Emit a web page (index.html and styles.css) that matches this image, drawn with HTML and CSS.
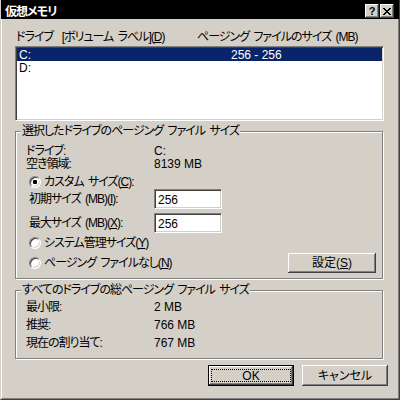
FILE: index.html
```html
<!DOCTYPE html>
<html lang="ja">
<head>
    <meta charset="UTF-8">
    <title>仮想メモリ</title>
    <link rel="stylesheet" href="styles.css">
</head>
<body>
    <div class="window">
        <div class="titlebar">
            <span class="title">仮想メモリ</span>
            <div class="caption-buttons">
                <span class="cap-btn help">?</span>
                <span class="cap-btn">
                    <svg width="8" height="7" viewBox="0 0 8 7" shape-rendering="crispEdges">
                        <path d="M0 0h2v1H0zM6 0h2v1H6zM1 1h2v1H1zM5 1h2v1H5zM2 2h4v1H2zM3 3h2v1H3zM2 4h4v1H2zM1 5h2v1H1zM5 5h2v1H5zM0 6h2v1H0zM6 6h2v1H6z" fill="#000"/>
                    </svg>
                </span>
            </div>
        </div>

        <div class="client">
            <div class="list-header">
                <span class="col-head">ドライブ&nbsp; [ボリューム ラベル](<u>D</u>)</span>
                <span>ページング ファイルのサイズ (MB)</span>
            </div>
            <div class="listbox">
                <div class="list-row selected"><span class="col-drive num">C:</span><span class="num">256 - 256</span></div>
                <div class="list-row"><span class="col-drive num">D:</span></div>
            </div>

            <!-- selected drive -->
            <div class="group group-drive">
                <span class="legend">選択したドライブのページング ファイル サイズ</span>
                <div class="info-list">
                    <div class="info"><span class="label">ドライブ:</span><span class="num">C:</span></div>
                    <div class="info"><span class="label">空き領域:</span><span class="num">8139 MB</span></div>
                </div>
                <div class="option first-option"><span class="radio on"></span><span>カスタム サイズ(<u>C</u>):</span></div>
                <div class="size-row"><span class="size-label">初期サイズ (MB)(<u>I</u>):</span><span class="edit num">256</span></div>
                <div class="size-row gap"><span class="size-label">最大サイズ (MB)(<u>X</u>):</span><span class="edit num">256</span></div>
                <div class="option sys-option"><span class="radio"></span><span>システム管理サイズ(<u>Y</u>)</span></div>
                <div class="last-row">
                    <div class="option"><span class="radio"></span><span>ページング ファイルなし(<u>N</u>)</span></div>
                    <button class="btn set-btn">設定(<u>S</u>)</button>
                </div>
            </div>

            <!-- all drives -->
            <div class="group group-total">
                <span class="legend">すべてのドライブの総ページング ファイル サイズ</span>
                <div class="total-list">
                    <div class="total"><span class="label">最小限:</span><span class="num">2 MB</span></div>
                    <div class="total"><span class="label">推奨:</span><span class="num">766 MB</span></div>
                    <div class="total"><span class="label">現在の割り当て:</span><span class="num">767 MB</span></div>
                </div>
            </div>

            <div class="dialog-buttons">
                <button class="btn default num">OK</button>
                <button class="btn">キャンセル</button>
            </div>
        </div>
    </div>
</body>
</html>
```

FILE: styles.css
```css
body {
    margin: 0;
    font-family: "Liberation Sans", "Noto Sans CJK JP", sans-serif;
    font-size: 12px;
    line-height: 12px;
    color: #000;
    letter-spacing: -1px;
    word-spacing: 2px;
    font-feature-settings: "palt";
}

u { text-decoration: underline; }

.num { letter-spacing: 0; word-spacing: 0; }

.window {
    width: 400px;
    height: 400px;
    box-sizing: border-box;
    background-color: #d4d0c8;
    border-left: 1px solid #d4d0c8;
    border-right: 1px solid #404040;
    border-bottom: 1px solid #404040;
    display: flex;
    flex-direction: column;
}

.titlebar {
    height: 19px;
    flex: none;
    background-color: #000;
    display: flex;
    justify-content: space-between;
    align-items: flex-start;
}

.title {
    color: #fff;
    font-weight: bold;
    padding: 6px 0 0 4px;
}

.caption-buttons {
    display: flex;
    gap: 1px;
    padding: 4px 5px 0 0;
}

.cap-btn {
    width: 14px;
    height: 14px;
    box-sizing: border-box;
    background-color: #d4d0c8;
    box-shadow: inset -1px -1px #404040, inset 1px 1px #fff, inset -2px -2px #808080;
    display: flex;
    align-items: center;
    justify-content: center;
}

.cap-btn.help {
    font-weight: bold;
    font-size: 11px;
    letter-spacing: 0;
    padding-bottom: 1px;
}

.client {
    flex: 1;
    border-left: 1px solid #fff;
    border-right: 1px solid #808080;
    border-bottom: 1px solid #808080;
    padding: 12px 14px 0 13px;
    display: flex;
    flex-direction: column;
}

.list-header {
    display: flex;
    height: 12px;
    padding-left: 1px;
}

.col-head { width: 181px; }

.listbox {
    margin-top: 3px;
    height: 75px;
    box-sizing: border-box;
    background-color: #fff;
    border: 1px solid;
    border-color: #808080 #fff #fff #808080;
    box-shadow: inset 1px 1px #404040, inset -1px -1px #d4d0c8;
    padding: 1px;
}

.list-row {
    display: flex;
    align-items: center;
    height: 13px;
    padding-left: 2px;
}

.list-row.selected {
    background-color: #0a246a;
    color: #fff;
}

.col-drive { width: 212px; }

.group {
    width: 368px;
    box-sizing: border-box;
    border: 1px solid #808080;
    box-shadow: inset 1px 1px #fff, 1px 1px #fff;
    display: flex;
    flex-direction: column;
}

.group-drive { margin-top: 10px; height: 148px; }
.group-total { margin-top: 11px; height: 69px; }

.legend {
    align-self: flex-start;
    margin: -7px 0 0 5px;
    padding: 0 1px;
    height: 13px;
    line-height: 13px;
    background-color: #d4d0c8;
}

.info-list { margin-top: 6px; }

.info {
    display: flex;
    align-items: center;
    height: 13px;
    padding-left: 10px;
}

.label { width: 128px; }

.option {
    display: flex;
    align-items: center;
    gap: 3px;
    height: 14px;
    padding-left: 13px;
}

.first-option { margin-top: 5px; }
.sys-option { margin-top: 3px; }

.radio {
    width: 12px;
    height: 12px;
    flex: none;
    box-sizing: border-box;
    border-radius: 50%;
    border: 1px solid;
    border-color: #808080 #fff #fff #808080;
    box-shadow: inset 1px 1px #404040, inset -1px -1px #d4d0c8;
    background-color: #fff;
    position: relative;
}

.radio.on::after {
    content: "";
    position: absolute;
    left: 3px;
    top: 3px;
    width: 4px;
    height: 4px;
    border-radius: 1px;
    background-color: #000;
}

.size-row {
    display: flex;
    align-items: center;
    height: 20px;
    padding-left: 13px;
}

.size-row.gap { margin-top: 4px; }

.size-label { width: 125px; }

.edit {
    width: 68px;
    height: 20px;
    box-sizing: border-box;
    background-color: #fff;
    border: 1px solid;
    border-color: #808080 #fff #fff #808080;
    box-shadow: inset 1px 1px #404040, inset -1px -1px #d4d0c8;
    padding: 4px 0 0 3px;
}

.last-row {
    margin-top: 3px;
    height: 20px;
    display: flex;
    justify-content: space-between;
    align-items: center;
    padding-right: 6px;
}

.btn {
    position: relative;
    width: 86px;
    height: 21px;
    padding: 0;
    border: none;
    background-color: #d4d0c8;
    box-shadow: inset -1px -1px #404040, inset 1px 1px #fff, inset -2px -2px #808080;
    font: inherit;
    font-feature-settings: "palt";
    color: #000;
}

.set-btn { width: 88px; height: 20px; letter-spacing: 0; }

.btn.default {
    box-shadow: inset 0 0 0 1px #000, inset -2px -2px #404040, inset 2px 2px #fff, inset -3px -3px #808080;
}

.btn.default::after {
    content: "";
    position: absolute;
    inset: 4px 3px;
    border: 1px dotted #000;
}

.total-list { margin-top: 1px; }

.total {
    display: flex;
    align-items: center;
    height: 18px;
    padding-left: 10px;
}

.dialog-buttons {
    margin: 6px -4px 0 0;
    display: flex;
    justify-content: flex-end;
    gap: 8px;
}
```
